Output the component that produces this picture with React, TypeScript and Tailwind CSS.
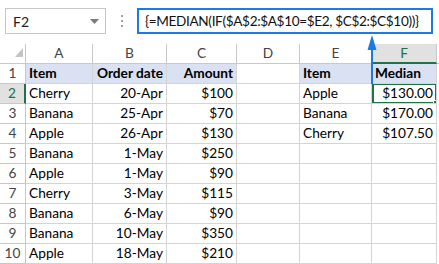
import React from "react";

const font = { fontFamily: "Lato, 'Liberation Sans', sans-serif" };

const rows: [string, string, string, string, string][] = [
  ["Cherry", "20-Apr", "$100", "Apple", "$130.00"],
  ["Banana", "25-Apr", "$70", "Banana", "$170.00"],
  ["Apple", "26-Apr", "$130", "Cherry", "$107.50"],
  ["Banana", "1-May", "$250", "", ""],
  ["Apple", "1-May", "$90", "", ""],
  ["Cherry", "3-May", "$115", "", ""],
  ["Banana", "6-May", "$90", "", ""],
  ["Banana", "10-May", "$350", "", ""],
  ["Apple", "18-May", "$210", "", ""],
];

const cols = "grid grid-cols-[26px_67px_74px_70px_63px_72px_65px_2px]";
const cell = "h-5 border-r border-b border-[#d4d4d4] flex items-center px-[3px] overflow-hidden whitespace-nowrap";

export default function App() {
  return (
    <div className="relative w-[439px] h-[264px] bg-white text-black overflow-hidden text-[13.7px]" style={font}>
      {/* formula bar */}
      <div className="h-[44px] flex items-start pt-2">
        <div className="ml-[5px] w-[101px] h-[26px] border border-[#c6c6c6] flex items-center pl-[7px] pr-[6px] text-[14px] text-[#222]">
          <span className="flex-1">F2</span>
          <svg width="9" height="5" viewBox="0 0 9 5"><path d="M0 0h9L4.5 5z" fill="#7a7a7a" /></svg>
        </div>
        <div className="w-[31px] h-[26px] flex flex-col items-center justify-center gap-[3px]">
          <span className="w-[2px] h-[2px] bg-[#a0a0a0]" />
          <span className="w-[2px] h-[2px] bg-[#a0a0a0]" />
          <span className="w-[2px] h-[2px] bg-[#a0a0a0]" />
        </div>
        <div className="w-[296px] h-[26px] border-[2px] border-[#1a7be6] flex items-center pl-[6px] text-[13.6px] text-[#111] tracking-[-0.35px] whitespace-nowrap overflow-hidden">
          {"{=MEDIAN(IF($A$2:$A$10=$E2, $C$2:$C$10))}"}
        </div>
      </div>
      {/* column headers */}
      <div className={cols}>
        <div className="h-5 border-r border-b border-[#c8c8c8] relative">
          <svg className="absolute left-[15px] top-[4px]" width="8" height="9" viewBox="0 0 8 9"><path d="M8 0V9H0z" fill="#c4c4c4" /></svg>
        </div>
        {["A", "B", "C", "D", "E"].map((c) => (
          <div key={c} className="h-5 border-r border-b border-[#c8c8c8] flex items-center justify-center text-[#444]">{c}</div>
        ))}
        <div className="h-5 bg-[#e1e1e1] border-r border-[#c8c8c8] border-b-2 border-b-[#217346] flex items-center justify-center text-[#217346]">F</div>
        <div className="h-5 border-b border-[#c8c8c8]" />
      </div>
      {/* row 1 */}
      <div className={cols}>
        <div className="h-5 border-r border-b border-[#c8c8c8] flex items-center justify-center text-[#444]">1</div>
        <div className={`${cell} bg-[#d9e1f2] font-bold`}>Item</div>
        <div className={`${cell} bg-[#d9e1f2] font-bold justify-end`}>Order date</div>
        <div className={`${cell} bg-[#d9e1f2] font-bold justify-end`}>Amount</div>
        <div className={cell} />
        <div className={`${cell} bg-[#d9e1f2] font-bold`}>Item</div>
        <div className={`${cell} bg-[#d9e1f2] font-bold`}>Median</div>
        <div className="h-5" />
      </div>
      {rows.map((r, i) => {
        const sel = i === 0;
        return (
          <div key={i} className={cols}>
            <div
              className={
                sel
                  ? "h-5 bg-[#e1e1e1] border-r-2 border-r-[#217346] border-b border-b-[#c8c8c8] flex items-center justify-center text-[#217346]"
                  : "h-5 border-r border-b border-[#c8c8c8] flex items-center justify-center text-[#444]"
              }
            >
              {i + 2}
            </div>
            <div className={cell}>{r[0]}</div>
            <div className={`${cell} justify-end`}>{r[1]}</div>
            <div className={`${cell} justify-end`}>{r[2]}</div>
            <div className={cell} />
            <div className={cell}>{r[3]}</div>
            <div className={`${cell} justify-end relative`}>
              {r[4]}
              {sel && (
                <>
                  <div className="absolute left-0 top-[-1px] right-[-1px] bottom-[-1px] border-2 border-[#217346]" />
                  <div className="absolute right-[-3px] bottom-[-3px] w-[6px] h-[6px] bg-[#217346] border border-white" />
                </>
              )}
            </div>
            <div className="h-5" />
          </div>
        );
      })}
      {/* arrow */}
      <svg className="absolute left-[366px] top-[34px]" width="12" height="50" viewBox="0 0 12 50">
        <path d="M6 1L10.5 16H1.5z" fill="#1a7be6" />
        <rect x="5" y="14" width="2" height="36" fill="#1a7be6" />
      </svg>
    </div>
  );
}
